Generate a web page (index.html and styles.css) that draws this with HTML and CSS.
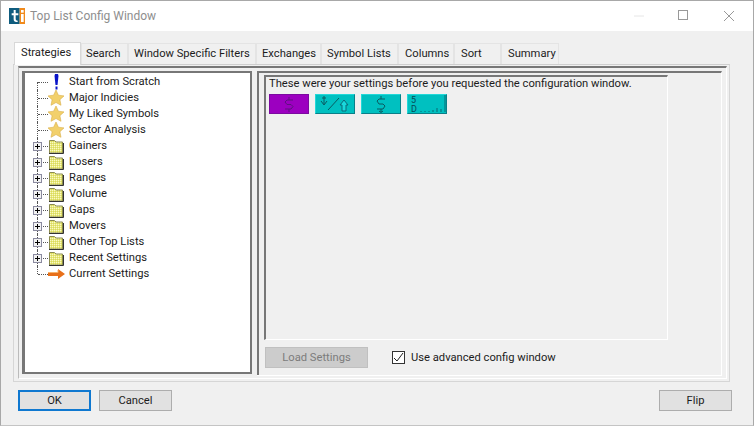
FILE: index.html
```html
<!DOCTYPE html>
<html lang="en">
<head>
<meta charset="utf-8">
<title>Top List Config Window</title>
<link rel="stylesheet" href="styles.css">
</head>
<body>
<div class="window">
  <header class="titlebar">
    <svg class="logo" width="24" height="24" viewBox="0 0 24 24"><rect width="16" height="24" fill="#0f5c7e"/><rect x="16" width="8" height="24" fill="#f08a1c"/><path d="M7 3h3v5h4v3h-4v6q0 2 3 2v2q-6 1-6-4v-6H4V8h3z" fill="#fff"/><rect x="18" y="3" width="4" height="4" fill="#fff"/><rect x="18" y="9" width="4" height="12" fill="#fff"/></svg>
    <span class="title">Top List Config Window</span>
    <div class="controls">
      <svg width="12" height="12" viewBox="0 0 12 12"><path d="M1 6h10" stroke="#e6e6e6"/></svg>
      <svg width="12" height="12" viewBox="0 0 12 12"><rect x=".5" y=".5" width="9" height="9" fill="none" stroke="#999"/></svg>
      <svg width="12" height="12" viewBox="0 0 12 12"><path d="M1 1l10 10M11 1L1 11" stroke="#999"/></svg>
    </div>
  </header>
  <main class="content">
    <nav class="tabs">
      <span class="tab active">Strategies</span>
      <span class="tab t-search">Search</span>
      <span class="tab t-filters">Window Specific Filters</span>
      <span class="tab t-exch">Exchanges</span>
      <span class="tab t-lists">Symbol Lists</span>
      <span class="tab t-cols">Columns</span>
      <span class="tab t-sort">Sort</span>
      <span class="tab t-sum">Summary</span>
    </nav>
    <section class="pane">
      <div class="pane-inner">
        <div class="tree-frame">
          <ul class="tree">
            <li class="row first"><span class="stub"></span><svg class="icon" width="16" height="16" viewBox="0 0 16 16"><path d="M7 0h3l.5 2-1 9H7.500l-1-9z" fill="#0a14c8"/><rect x="7.500" y="12.500" width="2" height="3" fill="#0a14c8"/></svg><span>Start from Scratch</span></li>
            <li class="row"><span class="stub"></span><svg class="icon" width="16" height="16" viewBox="0 0 16 16"><use href="#star"/></svg><span>Major Indicies</span></li>
            <li class="row"><span class="stub"></span><svg class="icon" width="16" height="16" viewBox="0 0 16 16"><use href="#star"/></svg><span>My Liked Symbols</span></li>
            <li class="row"><span class="stub"></span><svg class="icon" width="16" height="16" viewBox="0 0 16 16"><use href="#star"/></svg><span>Sector Analysis</span></li>
            <li class="row"><span class="stub"></span><i class="plus"></i><svg class="icon" width="16" height="16" viewBox="0 0 16 16"><use href="#folder"/></svg><span>Gainers</span></li>
            <li class="row"><span class="stub"></span><i class="plus"></i><svg class="icon" width="16" height="16" viewBox="0 0 16 16"><use href="#folder"/></svg><span>Losers</span></li>
            <li class="row"><span class="stub"></span><i class="plus"></i><svg class="icon" width="16" height="16" viewBox="0 0 16 16"><use href="#folder"/></svg><span>Ranges</span></li>
            <li class="row"><span class="stub"></span><i class="plus"></i><svg class="icon" width="16" height="16" viewBox="0 0 16 16"><use href="#folder"/></svg><span>Volume</span></li>
            <li class="row"><span class="stub"></span><i class="plus"></i><svg class="icon" width="16" height="16" viewBox="0 0 16 16"><use href="#folder"/></svg><span>Gaps</span></li>
            <li class="row"><span class="stub"></span><i class="plus"></i><svg class="icon" width="16" height="16" viewBox="0 0 16 16"><use href="#folder"/></svg><span>Movers</span></li>
            <li class="row"><span class="stub"></span><i class="plus"></i><svg class="icon" width="16" height="16" viewBox="0 0 16 16"><use href="#folder"/></svg><span>Other Top Lists</span></li>
            <li class="row"><span class="stub"></span><i class="plus"></i><svg class="icon" width="16" height="16" viewBox="0 0 16 16"><use href="#folder"/></svg><span>Recent Settings</span></li>
            <li class="row last"><span class="stub"></span><svg class="icon" width="17" height="16" viewBox="0 0 17 16"><path d="M0 6h10V3l7 5-7 5v-3H0z" fill="#e8701a"/><path d="M0 6.500h10V4" fill="none" stroke="#f6b26b"/></svg><span class="tight">Current Settings</span></li>
          </ul>
        </div>
        <div class="side">
          <div class="settings">
            <p class="note">These were your settings before you requested the configuration window.</p>
            <div class="chips">
              <svg class="chip purple" width="40" height="20" viewBox="0 0 38 18"><g fill="none" stroke="#5e1080"><path d="M23 5h-6l-2 2 2 2.500h4l2 2-2 2.500h-6"/><path d="M19 2v3M19 14v3"/></g></svg>
              <svg class="chip" width="40" height="20" viewBox="0 0 38 18"><g fill="none" stroke="#0a5a60"><path d="M6 3h4M8 1v8M5 6l3 4 3-4M12 15L23 3"/></g><path d="M24 10l4-5 4 5h-2v6h-4v-6z" fill="#19d8dc" stroke="#0a6a78"/></svg>
              <svg class="chip" width="40" height="20" viewBox="0 0 38 18"><g fill="none" stroke="#0a5a60"><path d="M23 4h-6l-2 2 2 3h4l2 2-2 3h-6"/><path d="M19 1v3M19 14v3M17 16l2 1.500 2-1.500"/></g></svg>
              <svg class="chip" width="40" height="20" viewBox="0 0 38 18"><text x="3" y="8" class="chip-text">5</text><text x="3" y="17" class="chip-text">D</text><g fill="none" stroke="#086a75"><path d="M13 17v-1M17 17v-1M21 17v-1M25 17v-2M29 17v-4M33 17v-3M37 17V0"/></g></svg>
            </div>
          </div>
          <div class="actions">
            <button class="load" type="button">Load Settings</button>
            <label class="check"><span class="box"><svg width="11" height="11" viewBox="0 0 11 11"><path d="M1 6l3 3 6-8" fill="none" stroke="#222"/></svg></span>Use advanced config window</label>
          </div>
        </div>
      </div>
    </section>
    <footer class="buttons">
      <button class="btn ok" type="button">OK</button>
      <button class="btn" type="button">Cancel</button>
      <button class="btn flip" type="button">Flip</button>
    </footer>
  </main>
</div>
<svg class="defs" width="0" height="0">
  <defs>
    <pattern id="stipple" width="2" height="2" patternUnits="userSpaceOnUse"><rect width="2" height="2" fill="#e8e878"/><rect width="1" height="1" fill="#f8f8c8"/><rect x="1" y="1" width="1" height="1" fill="#d8d860"/></pattern>
    <g id="star"><path d="M8 0l2.400 5.200 5.600.7-4.100 3.800 1.100 5.600L8 12.500l-5 2.800 1.100-5.600L0 5.900l5.600-.7z" fill="#f2d06b" stroke="#d9ae4a" stroke-width=".6"/></g>
    <g id="folder"><path d="M1.500 4V2.500h5L8 4h6.500v11h-13z" fill="url(#stipple)" stroke="#8a8a50"/><path d="M1 15.500h14.500V5" fill="none" stroke="#333"/></g>
  </defs>
</svg>
</body>
</html>
```
FILE: styles.css
```css
* { box-sizing: border-box; }
html, body { margin: 0; padding: 0; }
body { width: 754px; height: 426px; overflow: hidden; background: #f0f0f0; font: 11.200px/16px Roboto, "Liberation Sans", sans-serif; color: #1c1c1c; }
.defs { position: absolute; }
.window { width: 754px; height: 426px; display: flex; flex-direction: column; border: 1px solid #a8a8a8; border-bottom-color: #c4c4c4; }
.titlebar { height: 30px; flex: none; background: #fff; display: flex; align-items: center; padding: 0 18px 0 8px; gap: 5px; }
.logo { width: 16px; height: 16px; margin-top: -1px; }
.title { font-size: 12px; color: #8e8e8e; }
.controls { margin-left: auto; display: flex; gap: 33px; align-items: center; margin-top: -1px; }
.content { flex: 1; display: flex; flex-direction: column; padding: 10px 12px 0 12px; min-height: 0; }
.tabs { display: flex; height: 23px; align-items: flex-end; padding-left: 1px; }
.tab { height: 21px; display: flex; align-items: center; justify-content: flex-start; padding-left: 5px; background: #f0f0f0; border: 1px solid #e4e4e4; border-bottom: 0; white-space: nowrap; }
.tab.active { height: 23px; width: 67px; background: #fff; border-color: #d8d8d8; padding-left: 6px; margin-bottom: -1px; position: relative; z-index: 1; padding-bottom: 3px; }
.t-search { width: 47px; padding-left: 4px; }
.t-filters { width: 128px; }
.t-exch { width: 65px; padding-left: 5px; }
.t-lists { width: 77px; padding-left: 5px; }
.t-cols { width: 56px; padding-left: 6px; }
.t-sort { width: 47px; padding-left: 6px; }
.t-sum { width: 58px; padding-left: 6px; }
.pane { width: 717px; height: 318px; border: 1px solid #d6d6d6; border-top-color: #cfcfcf; background: #f0f0f0; padding: 1px 2px 2px 4px; }
.pane-inner { height: 100%; display: flex; gap: 5px; border-top: 2px solid #777; border-left: 1px solid #bbb; border-right: 1px solid #fff; border-bottom: 1px solid #fff; }
.tree-frame { width: 230px; height: 303px; margin: 3px 0 0 3px; flex: none; background: #fff; }
.tree { margin: 0; padding: 1px 0 0; list-style: none; height: 100%; background: #fff; border: 3px solid #777; border-right-width: 2px; border-bottom-width: 2px; border-top-width: 2px; }
.row { position: relative; height: 16px; display: flex; align-items: center; padding-left: 23px; gap: 5px; white-space: nowrap; }
.stub { position: absolute; left: 12px; top: 0; bottom: 0; width: 10px; border-left: 1px dotted #555; }
.stub::after { content: ""; position: absolute; left: 0; top: 8px; width: 10px; border-top: 1px dotted #555; }
.first .stub { top: 8px; }
.first .stub::after { top: 0; }
.last .stub { bottom: 8px; }
.plus { position: absolute; left: 8px; top: 4px; width: 9px; height: 9px; border: 1px solid #8b8ba0; background: linear-gradient(#000, #000) center / 5px 1px no-repeat, linear-gradient(#000, #000) center / 1px 5px no-repeat, #f2f2f2; z-index: 1; }
.icon { flex: none; }
.tight { margin-left: -1px; }
.side { width: 465px; height: 305px; flex: none; display: flex; flex-direction: column; margin-top: 3px; border-top: 2px solid #777; border-right: 1px solid #fff; border-bottom: 1px solid #fff; padding: 2px 0 0 7px; box-shadow: inset 2px 0 0 #777; }
.settings { width: 404px; height: 265px; flex: none; background: #f0f0f0; border-top: 2px solid #777; border-left: 2px solid #777; border-right: 1px solid #fff; border-bottom: 1px solid #fff; padding: 0 0 0 3px; }
.note { margin: 0; height: 14px; line-height: 14px; white-space: nowrap; }
.chips { display: flex; gap: 6px; margin-top: 3px; }
.chip { flex: none; background: #00c0c0; border: 1px solid #0a9ca8; border-color: #22d8d8 #0a7f88 #0a7f88 #22d8d8; }
.chip.purple { background: #9c00c0; border-color: #7c0aa0; }
.chip-text { font-size: 9px; fill: #064a55; }
.actions { display: flex; align-items: center; height: 37px; padding-left: 1px; }
.load { width: 103px; height: 21px; background: #cccccc; border: 1px solid #c0c0c0; color: #7c7c7c; font: inherit; padding: 0; }
.check { display: flex; align-items: center; margin-left: 24px; }
.box { width: 13px; height: 13px; border: 1px solid #333; background: #fff; display: flex; align-items: center; justify-content: center; margin-right: 6px; }
.buttons { display: flex; gap: 8px; padding: 8px 0 0 5px; }
.btn { width: 73px; height: 21px; padding: 0; background: #e1e1e1; border: 1px solid #adadad; color: #1c1c1c; font: inherit; }
.btn.ok { border: 2px solid #0f78d0; }
.btn.flip { margin-left: auto; margin-right: 9px; }
```
